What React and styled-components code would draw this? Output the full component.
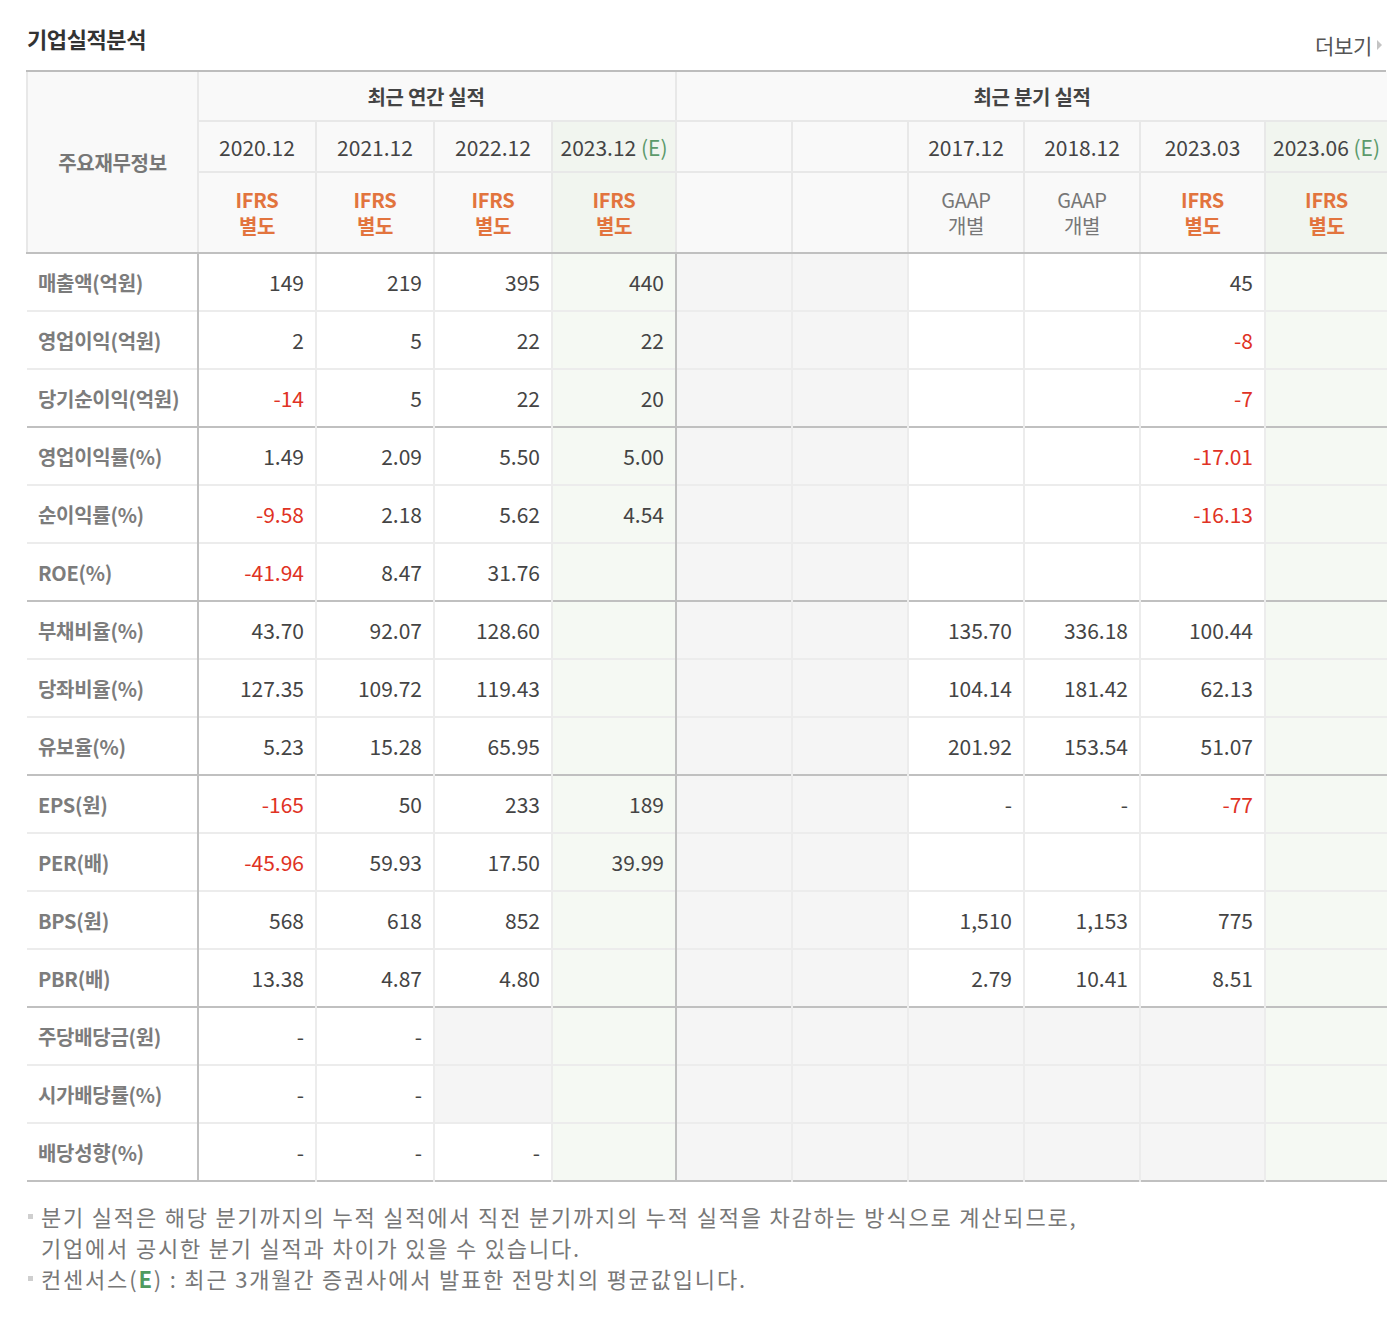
import React from 'react'
import styled, { createGlobalStyle } from 'styled-components'

const GlobalStyle = createGlobalStyle`
  body {
    margin: 0;
    background: #fff;
    font-family: "Noto Sans CJK KR", "Noto Sans", sans-serif;
  }
`

const Section = styled.div`
  width: 1360px;
  padding: 0 0 40px 26px;
`

const TitleBar = styled.div`
  display: flex;
  justify-content: space-between;
  align-items: flex-end;
  height: 70px;
  border-bottom: 2px solid #bdbdbd;
`

const Title = styled.h2`
  margin: 0 0 16px 1px;
  font-size: 22px;
  font-weight: 700;
  letter-spacing: -0.4px;
  color: #333;
`

const More = styled.a`
  display: flex;
  align-items: center;
  gap: 5px;
  margin: 0 4px 10px 0;
  font-size: 21px;
  color: #555;
  letter-spacing: -0.3px;
  text-decoration: none;
  &::after {
    content: '';
    border-left: 5px solid #c4c4c4;
    border-top: 5px solid transparent;
    border-bottom: 5px solid transparent;
  }
`

const Table = styled.table`
  width: 1360px;
  table-layout: fixed;
  border-collapse: collapse;
  font-size: 21px;
  color: #444;
`

const Th = styled.th`
  height: ${p => p.$h || 48}px;
  padding: 0 ${p => (p.$shift ? p.$shift : 0)}px 0 0;
  background: ${p => (p.$est ? '#f1f5ef' : '#f9f9f9')};
  border: 2px solid #e8e8e8;
  border-top: none;
  border-left: ${p => (p.$thickLeft ? '2px solid #c0c0c0' : '2px solid #e8e8e8')};
  border-bottom: ${p => (p.$thickBottom ? '2px solid #c0c0c0' : '2px solid #e8e8e8')};
  font-weight: ${p => (p.$bold ? 700 : 400)};
  font-size: ${p => (p.$bold ? '20px' : '21px')};
  color: ${p => (p.$muted ? '#777' : '#444')};
  letter-spacing: ${p => (p.$bold ? '-0.3px' : '0')};
  text-align: center;
  &:last-child { border-right: none; }
`

const Estimate = styled.span`
  color: #5c9a6b;
`

const Basis = styled.span`
  display: block;
  font-size: 20px;
  line-height: 26px;
  font-weight: ${p => (p.$ifrs ? 700 : 400)};
  color: ${p => (p.$ifrs ? '#e2743e' : '#777')};
  letter-spacing: -0.3px;
`

const Row = styled.tr`
  height: 58px;
  border-bottom: ${p => (p.$groupEnd ? '2px solid #c0c0c0' : '2px solid #ececec')};
`

const Label = styled.td`
  padding: 0 0 0 11px;
  font-size: 20px;
  font-weight: 700;
  color: #7c7c7c;
  letter-spacing: -0.3px;
  border-right: 2px solid #c0c0c0;
  white-space: nowrap;
`

const bgFor = p => (p.$est ? '#f5f9f3' : p.$empty ? '#f5f5f5' : '#fff')

const Td = styled.td`
  padding: 0 11px 0 0;
  text-align: right;
  background: ${bgFor};
  color: ${p => (p.$neg ? '#e03224' : '#444')};
  border-left: ${p => (p.$thickLeft ? '2px solid #c0c0c0' : '2px solid #ececec')};
`

const Notes = styled.ul`
  margin: 19px 0 0;
  padding: 0;
  list-style: none;
  font-size: 22px;
  line-height: 31px;
  color: #777;
  letter-spacing: 1.8px;
`

const Note = styled.li`
  position: relative;
  padding-left: 15px;
  &::before {
    content: '';
    position: absolute;
    left: 2px;
    top: 13px;
    width: 5px;
    height: 5px;
    background: ${p => (p.$bullet ? '#cfcfcf' : 'transparent')};
  }
`

const NoteE = styled.b`
  color: #4f9a5f;
`

const widths = [171, 118, 118, 118, 124, 116, 116, 116, 116, 125, 122]

const annualHeads = [
  { date: '2020.12', basis: 'IFRS', kind: '별도' },
  { date: '2021.12', basis: 'IFRS', kind: '별도' },
  { date: '2022.12', basis: 'IFRS', kind: '별도' },
  { date: '2023.12', basis: 'IFRS', kind: '별도', est: true },
]

const quarterHeads = [
  null,
  null,
  { date: '2017.12', basis: 'GAAP', kind: '개별' },
  { date: '2018.12', basis: 'GAAP', kind: '개별' },
  { date: '2023.03', basis: 'IFRS', kind: '별도' },
  { date: '2023.06', basis: 'IFRS', kind: '별도', est: true },
]

// null = no data (gray cell), '' = blank white cell
const rows = [
  ['매출액(억원)', ['149', '219', '395', '440'], [null, null, '', '', '45', '']],
  ['영업이익(억원)', ['2', '5', '22', '22'], [null, null, '', '', '-8', '']],
  ['당기순이익(억원)', ['-14', '5', '22', '20'], [null, null, '', '', '-7', '']],
  ['영업이익률(%)', ['1.49', '2.09', '5.50', '5.00'], [null, null, '', '', '-17.01', '']],
  ['순이익률(%)', ['-9.58', '2.18', '5.62', '4.54'], [null, null, '', '', '-16.13', '']],
  ['ROE(%)', ['-41.94', '8.47', '31.76', ''], [null, null, '', '', '', '']],
  ['부채비율(%)', ['43.70', '92.07', '128.60', ''], [null, null, '135.70', '336.18', '100.44', '']],
  ['당좌비율(%)', ['127.35', '109.72', '119.43', ''], [null, null, '104.14', '181.42', '62.13', '']],
  ['유보율(%)', ['5.23', '15.28', '65.95', ''], [null, null, '201.92', '153.54', '51.07', '']],
  ['EPS(원)', ['-165', '50', '233', '189'], [null, null, '-', '-', '-77', '']],
  ['PER(배)', ['-45.96', '59.93', '17.50', '39.99'], [null, null, '', '', '', '']],
  ['BPS(원)', ['568', '618', '852', ''], [null, null, '1,510', '1,153', '775', '']],
  ['PBR(배)', ['13.38', '4.87', '4.80', ''], [null, null, '2.79', '10.41', '8.51', '']],
  ['주당배당금(원)', ['-', '-', null, ''], [null, null, null, null, null, '']],
  ['시가배당률(%)', ['-', '-', null, ''], [null, null, null, null, null, '']],
  ['배당성향(%)', ['-', '-', '-', ''], [null, null, null, null, null, '']],
]

const groupEnds = [2, 5, 8, 12, 15]

const isNeg = v => typeof v === 'string' && v.length > 1 && v.startsWith('-')

function DateHead({ head, first }) {
  if (!head) return <Th $h={49} $thickLeft={first} />
  return (
    <Th $h={49} $est={head.est} $thickLeft={first}>
      {head.date}
      {head.est && <Estimate> (E)</Estimate>}
    </Th>
  )
}

function BasisHead({ head, first }) {
  if (!head) return <Th $h={79} $thickLeft={first} $thickBottom />
  const ifrs = head.basis === 'IFRS'
  return (
    <Th $h={79} $est={head.est} $thickLeft={first} $thickBottom>
      <Basis $ifrs={ifrs}>{head.basis}</Basis>
      <Basis $ifrs={ifrs}>{head.kind}</Basis>
    </Th>
  )
}

export default function App() {
  const heads = [...annualHeads, ...quarterHeads]
  return (
    <Section>
      <GlobalStyle />
      <TitleBar>
        <Title>기업실적분석</Title>
        <More href="#">더보기</More>
      </TitleBar>
      <Table>
        <colgroup>
          {widths.map((w, i) => <col key={i} style={{ width: w }} />)}
        </colgroup>
        <thead>
          <tr>
            <Th rowSpan={3} $bold $muted $thickBottom>주요재무정보</Th>
            <Th colSpan={4} $bold $thickLeft $shift={22}>최근 연간 실적</Th>
            <Th colSpan={6} $bold $thickLeft>최근 분기 실적</Th>
          </tr>
          <tr>
            {heads.map((h, i) => <DateHead key={i} head={h} first={i === 0 || i === 4} />)}
          </tr>
          <tr>
            {heads.map((h, i) => <BasisHead key={i} head={h} first={i === 0 || i === 4} />)}
          </tr>
        </thead>
        <tbody>
          {rows.map(([label, annual, quarter], r) => (
            <Row key={label} $groupEnd={groupEnds.includes(r)}>
              <Label>{label}</Label>
              {[...annual, ...quarter].map((v, i) => (
                <Td
                  key={i}
                  $est={i === 3 || i === 9}
                  $empty={v === null}
                  $neg={isNeg(v)}
                  $thickLeft={i === 4}
                >
                  {v}
                </Td>
              ))}
            </Row>
          ))}
        </tbody>
      </Table>
      <Notes>
        <Note $bullet>분기 실적은 해당 분기까지의 누적 실적에서 직전 분기까지의 누적 실적을 차감하는 방식으로 계산되므로,</Note>
        <Note>기업에서 공시한 분기 실적과 차이가 있을 수 있습니다.</Note>
        <Note $bullet>컨센서스(<NoteE>E</NoteE>) : 최근 3개월간 증권사에서 발표한 전망치의 평균값입니다.</Note>
      </Notes>
    </Section>
  )
}
